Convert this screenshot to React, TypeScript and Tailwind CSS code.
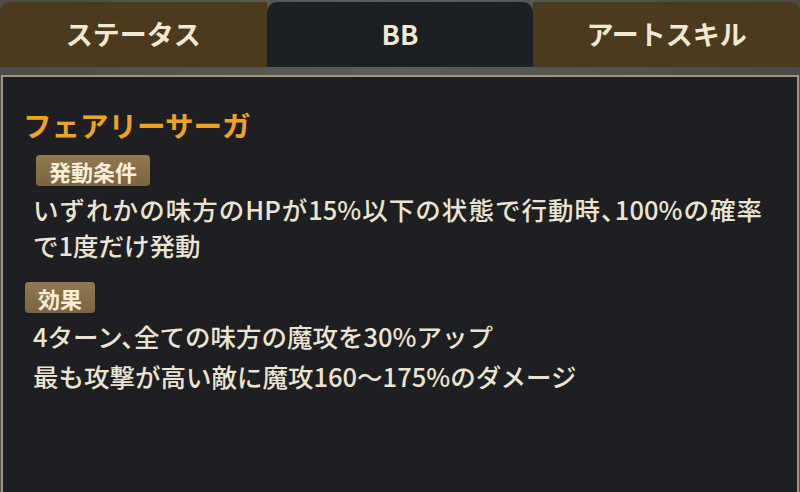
const tabs = [
  { label: 'ステータス', active: false },
  { label: 'BB', active: true },
  { label: 'アートスキル', active: false },
];

function Badge({ children, className = '' }: { children: React.ReactNode; className?: string }) {
  return (
    <div
      className={`inline-flex h-[31px] items-center rounded-[4px] bg-gradient-to-b from-[#937850] to-[#7b6441] px-[13px] text-[22px] font-bold leading-none text-[#f6eedb] ${className}`}
    >
      {children}
    </div>
  );
}

export default function App() {
  return (
    <div
      className="flex h-[492px] w-[800px] flex-col overflow-hidden bg-gradient-to-r from-[#4d4c49] via-[#5d5c58] to-[#4b4a47]"
      style={{ fontFamily: '"Noto Sans CJK JP", "Noto Sans", sans-serif' }}
    >
      <div className="flex h-[67px] pt-[2px]">
        {tabs.map((t, i) => (
          <div
            key={t.label}
            className={`flex flex-1 items-center justify-center text-[27px] font-bold text-[#f1e8d2] ${
              t.active ? 'rounded-t-[10px] bg-[#1c1f24]' : 'bg-[#4a3a1e]'
            } ${i === 0 ? 'rounded-tl-[10px]' : ''} ${i === 2 ? 'rounded-tr-[10px]' : ''}`}
          >
            {t.label}
          </div>
        ))}
      </div>

      <div className="h-[8px]" />

      {/* half-width punctuation (halt) like the game text */}
      <div className="mx-[1px] flex-1 border-x-2 border-t-2 border-[#a3957a] bg-[#1e1f22] pl-[20px] pr-[35px] pt-[30px] text-[#ece4d0] [font-feature-settings:'halt']">
        <div className="text-[28.5px] font-bold leading-[36px] text-[#f1a31f]">フェアリーサーガ</div>

        <Badge className="ml-[13px] mt-[12px]">発動条件</Badge>
        <p className="ml-[10px] mt-[5px] text-justify text-[25.5px] font-medium leading-[36px]">
          いずれかの味方のHPが15%以下の状態で行動時、100%の確率で1度だけ発動
        </p>

        <Badge className="ml-[2px] mt-[19px]">効果</Badge>
        <div className="ml-[10px] mt-[3px] text-[25.5px] font-medium leading-[40px]">
          <p>4ターン、全ての味方の魔攻を30%アップ</p>
          <p>最も攻撃が高い敵に魔攻160〜175%のダメージ</p>
        </div>
      </div>
    </div>
  );
}
